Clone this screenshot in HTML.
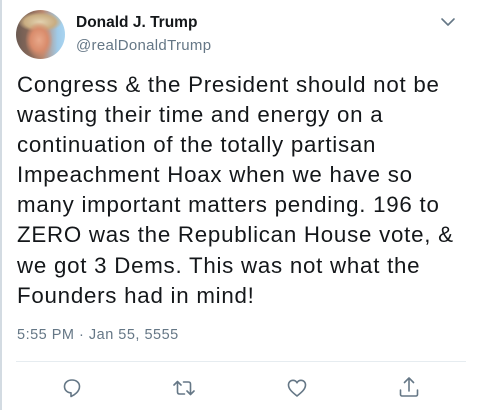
<!DOCTYPE html>
<html><head><meta charset="utf-8"><style>
html,body{margin:0;padding:0;background:#fff;width:480px;height:410px;overflow:hidden}
body{font-family:"Liberation Sans",Helvetica,Arial,sans-serif;position:relative}
.lb{position:absolute;left:0;top:0;width:2px;height:410px;background:#d3dbe2}
.av{position:absolute;left:16px;top:10px;width:49px;height:49px;border-radius:50%;overflow:hidden;
background:radial-gradient(ellipse 14px 18px at 23px 30px,#e8a88a 0,#d98c6c 60%,rgba(0,0,0,0) 100%),
radial-gradient(ellipse 22px 10px at 24px 12px,#e3d2b0 0,#c9ad82 70%,rgba(0,0,0,0) 100%),
linear-gradient(90deg,#6b5a52 0,#8a6a5a 30%,#b98870 55%,#9fcbe9 85%,#a9d4f0 100%)}
.name{position:absolute;left:76px;top:14px;font-weight:bold;font-size:15.5px;color:#14171a}
.handle{position:absolute;left:76px;top:37px;font-size:15px;color:#657786;letter-spacing:0.3px}
.body{position:absolute;left:17px;top:70px;font-size:22.3px;letter-spacing:0.75px;line-height:30.1px;color:#14171a;white-space:nowrap}
.time{position:absolute;left:17px;top:327px;font-size:14.5px;color:#657786;letter-spacing:0.5px}
.div{position:absolute;left:16px;top:361px;width:450px;height:1px;background:#e6ecf0}
svg.i{position:absolute;fill:none;stroke:#657786;stroke-width:1.6;stroke-linecap:round;stroke-linejoin:round}
</style></head><body>
<div class="lb"></div>
<div class="av"></div>
<div class="name">Donald J. Trump</div>
<div class="handle">@realDonaldTrump</div>
<svg class="i" style="left:440px;top:16px" width="16" height="12" viewBox="0 0 16 12"><path d="M2 3l6 6 6-6"/></svg>
<div class="body">Congress &amp; the President should not be<br>wasting their time and energy on a<br>continuation of the totally partisan<br>Impeachment Hoax when we have so<br>many important matters pending. 196 to<br>ZERO was the Republican House vote, &amp;<br>we got 3 Dems. This was not what the<br>Founders had in mind!</div>
<div class="time">5:55 PM · Jan 55, 5555</div>
<div class="div"></div>
<svg class="i" style="left:62px;top:377px" width="20" height="22" viewBox="0 0 20 22"><path d="M10 3c-4.5 0-7.5 2.8-7.5 6.5 0 3.8 3 6.3 6.5 6.3v3.7c3.5-1.5 8.5-5 8.5-10 0-3.7-3-6.5-7.5-6.5z"/></svg>
<svg class="i" style="left:171px;top:377px" width="26" height="22" viewBox="0 0 26 22"><path d="M3 8l3.5-3.5L10 8M6.5 5v10c0 1.2.8 2 2 2h5M23 14l-3.5 3.5L16 14M19.5 17V7c0-1.2-.8-2-2-2h-5"/></svg>
<svg class="i" style="left:286px;top:377px" width="22" height="22" viewBox="0 0 22 22"><path d="M11 19C6 15 2.5 12 2.5 8c0-2.8 2-4.7 4.5-4.7 1.8 0 3.2 1 4 2.5.8-1.5 2.2-2.5 4-2.5 2.5 0 4.5 1.9 4.5 4.7 0 4-3.5 7-8.5 11z"/></svg>
<svg class="i" style="left:398px;top:375px" width="22" height="24" viewBox="0 0 22 24"><path d="M11 3v13M6.5 7.5L11 3l4.5 4.5M2.5 15v4.5c0 .8.6 1.5 1.5 1.5h14c.9 0 1.5-.7 1.5-1.5V15"/></svg>
</body></html>
